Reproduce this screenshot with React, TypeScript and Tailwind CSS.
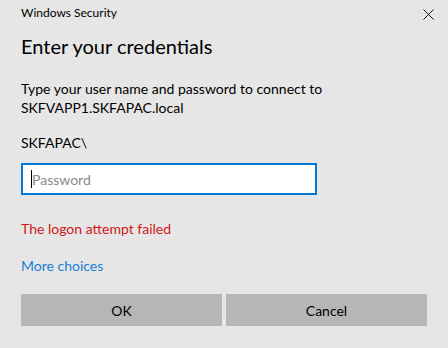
export default function App() {
  return (
    <div
      className="relative w-[448px] h-[348px] bg-[#e6e6e6] text-[#000] overflow-hidden"
      style={{ fontFamily: 'Lato, "Noto Sans", sans-serif' }}
    >
      {/* close */}
      <button className="absolute right-[14px] top-[8px] w-[12px] h-[12px] flex items-center justify-center">
        <svg width="11" height="11" viewBox="0 0 11 11">
          <path d="M0.5 0.5 L10.5 10.5 M10.5 0.5 L0.5 10.5" stroke="#111" strokeWidth="1" />
        </svg>
      </button>

      <div className="flex flex-col px-[21px]">
        <div className="pt-[5px] text-[12px] leading-[16px]">Windows Security</div>
        <div className="mt-[12px] text-[20px] leading-[26px]">Enter your credentials</div>

        <div className="mt-[20px] text-[14px] leading-[19px]">
          <div>Type your user name and password to connect to</div>
          <div>SKFVAPP1.SKFAPAC.local</div>
        </div>

        <div className="mt-[16px] text-[14px] leading-[19px]">SKFAPAC\</div>

        <div className="mt-[11px] w-[296px] h-[32px] border-2 border-[#0078d7] bg-white flex items-center pl-[8px]">
          <span className="w-px h-[18px] bg-black" />
          <span className="text-[14px] text-[#8a8a8a]">Password</span>
        </div>

        <div className="mt-[24px] text-[14px] leading-[19px] text-[#d01717]">The logon attempt failed</div>

        <div className="mt-[18px] text-[14px] leading-[19px] text-[#1a7ed6]">More choices</div>

        <div className="mt-[19px] flex gap-[4px]">
          <button className="w-[201px] h-[32px] bg-[#b6b6b6] text-[14px] text-black">OK</button>
          <button className="w-[201px] h-[32px] bg-[#b6b6b6] text-[14px] text-black">Cancel</button>
        </div>
      </div>
    </div>
  );
}
